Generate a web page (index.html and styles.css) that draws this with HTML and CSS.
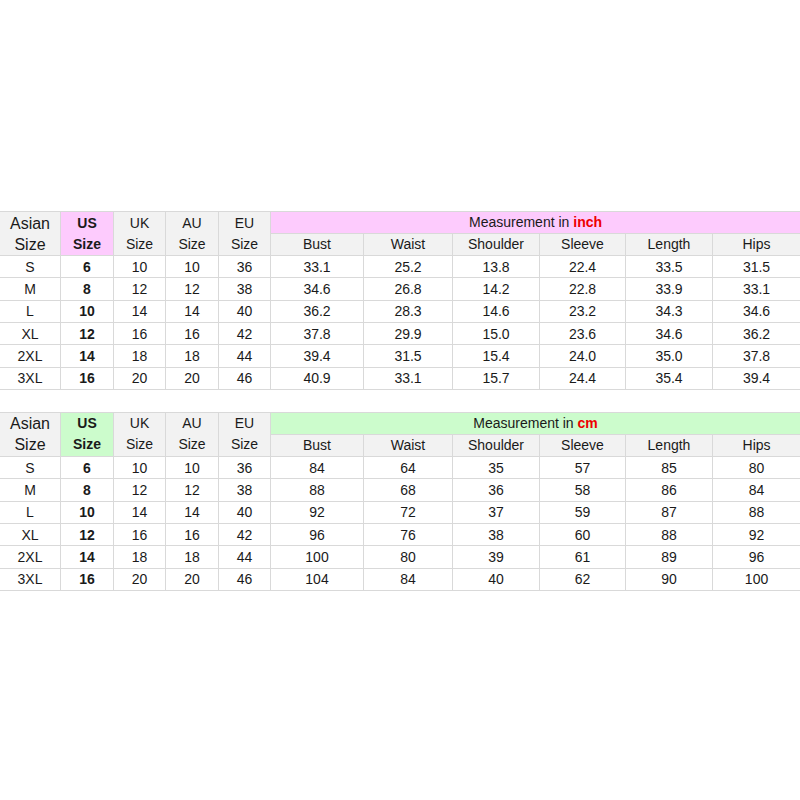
FILE: index.html
```html
<!DOCTYPE html>
<html>
<head>
<meta charset="utf-8">
<link rel="stylesheet" href="styles.css">
</head>
<body>
<div class="page">
<table class="chart pink">
  <colgroup>
    <col class="c1"><col class="c2"><col class="c3"><col class="c4"><col class="c5">
    <col class="m1"><col class="m2"><col class="m3"><col class="m4"><col class="m5"><col class="m6">
  </colgroup>
  <tr class="h1">
    <th rowspan="2" class="asian">Asian<br>Size</th>
    <th rowspan="2" class="us">US<br>Size</th>
    <th rowspan="2">UK<br>Size</th>
    <th rowspan="2">AU<br>Size</th>
    <th rowspan="2">EU<br>Size</th>
    <th colspan="6" class="meas">Measurement in <b class="unit">inch</b></th>
  </tr>
  <tr class="h2">
    <th>Bust</th><th>Waist</th><th>Shoulder</th><th>Sleeve</th><th>Length</th><th>Hips</th>
  </tr>
  <tr><td>S</td><td class="b">6</td><td>10</td><td>10</td><td>36</td><td>33.1</td><td>25.2</td><td>13.8</td><td>22.4</td><td>33.5</td><td>31.5</td></tr>
  <tr><td>M</td><td class="b">8</td><td>12</td><td>12</td><td>38</td><td>34.6</td><td>26.8</td><td>14.2</td><td>22.8</td><td>33.9</td><td>33.1</td></tr>
  <tr><td>L</td><td class="b">10</td><td>14</td><td>14</td><td>40</td><td>36.2</td><td>28.3</td><td>14.6</td><td>23.2</td><td>34.3</td><td>34.6</td></tr>
  <tr><td>XL</td><td class="b">12</td><td>16</td><td>16</td><td>42</td><td>37.8</td><td>29.9</td><td>15.0</td><td>23.6</td><td>34.6</td><td>36.2</td></tr>
  <tr><td>2XL</td><td class="b">14</td><td>18</td><td>18</td><td>44</td><td>39.4</td><td>31.5</td><td>15.4</td><td>24.0</td><td>35.0</td><td>37.8</td></tr>
  <tr><td>3XL</td><td class="b">16</td><td>20</td><td>20</td><td>46</td><td>40.9</td><td>33.1</td><td>15.7</td><td>24.4</td><td>35.4</td><td>39.4</td></tr>
</table>

<table class="chart green">
  <colgroup>
    <col class="c1"><col class="c2"><col class="c3"><col class="c4"><col class="c5">
    <col class="m1"><col class="m2"><col class="m3"><col class="m4"><col class="m5"><col class="m6">
  </colgroup>
  <tr class="h1">
    <th rowspan="2" class="asian">Asian<br>Size</th>
    <th rowspan="2" class="us">US<br>Size</th>
    <th rowspan="2">UK<br>Size</th>
    <th rowspan="2">AU<br>Size</th>
    <th rowspan="2">EU<br>Size</th>
    <th colspan="6" class="meas">Measurement in <b class="unit">cm</b></th>
  </tr>
  <tr class="h2">
    <th>Bust</th><th>Waist</th><th>Shoulder</th><th>Sleeve</th><th>Length</th><th>Hips</th>
  </tr>
  <tr><td>S</td><td class="b">6</td><td>10</td><td>10</td><td>36</td><td>84</td><td>64</td><td>35</td><td>57</td><td>85</td><td>80</td></tr>
  <tr><td>M</td><td class="b">8</td><td>12</td><td>12</td><td>38</td><td>88</td><td>68</td><td>36</td><td>58</td><td>86</td><td>84</td></tr>
  <tr><td>L</td><td class="b">10</td><td>14</td><td>14</td><td>40</td><td>92</td><td>72</td><td>37</td><td>59</td><td>87</td><td>88</td></tr>
  <tr><td>XL</td><td class="b">12</td><td>16</td><td>16</td><td>42</td><td>96</td><td>76</td><td>38</td><td>60</td><td>88</td><td>92</td></tr>
  <tr><td>2XL</td><td class="b">14</td><td>18</td><td>18</td><td>44</td><td>100</td><td>80</td><td>39</td><td>61</td><td>89</td><td>96</td></tr>
  <tr><td>3XL</td><td class="b">16</td><td>20</td><td>20</td><td>46</td><td>104</td><td>84</td><td>40</td><td>62</td><td>90</td><td>100</td></tr>
</table>
</div>
</body>
</html>
```
FILE: styles.css
```css
html, body {
  margin: 0;
  padding: 0;
  background: #ffffff;
}
.page {
  width: 800px;
  height: 800px;
  overflow: hidden;
  padding-top: 211px;
  box-sizing: border-box;
  display: flex;
  flex-direction: column;
  gap: 22px;
}
.chart {
  border-collapse: collapse;
  table-layout: fixed;
  width: 801px;
  margin-left: -1px;
  font-family: "Liberation Sans", Arial, sans-serif;
  font-size: 14px;
  color: #1a1a1a;
}
.c1 { width: 61px; }
.c2 { width: 53px; }
.c3 { width: 52px; }
.c4 { width: 53px; }
.c5 { width: 52px; }
.m1 { width: 93px; }
.m2 { width: 89px; }
.m3 { width: 87px; }
.m4 { width: 86px; }
.m5 { width: 87px; }
.m6 { width: 88px; }
.chart th, .chart td {
  border: 1px solid #d9d9d9;
  padding: 0;
  text-align: center;
  vertical-align: middle;
  font-weight: normal;
  line-height: 20px;
  overflow: hidden;
  white-space: nowrap;
}
.chart tr { height: 22.33px; }
.chart th {
  background: #f2f2f2;
  line-height: 21px;
}
.chart th.asian {
  font-size: 16px;
  line-height: 21px;
}
.chart th.us {
  font-weight: bold;
  font-size: 14px;
}
.chart td.b { font-weight: bold; }
.pink th.us, .pink th.meas { background: #fdcbfd; }
.green th.us, .green th.meas { background: #ccfccc; }
.unit { color: #ee0000; font-weight: bold; }
.chart tr.h1 { height: 21px; }
.chart tr.h2 { height: 22px; }
```
